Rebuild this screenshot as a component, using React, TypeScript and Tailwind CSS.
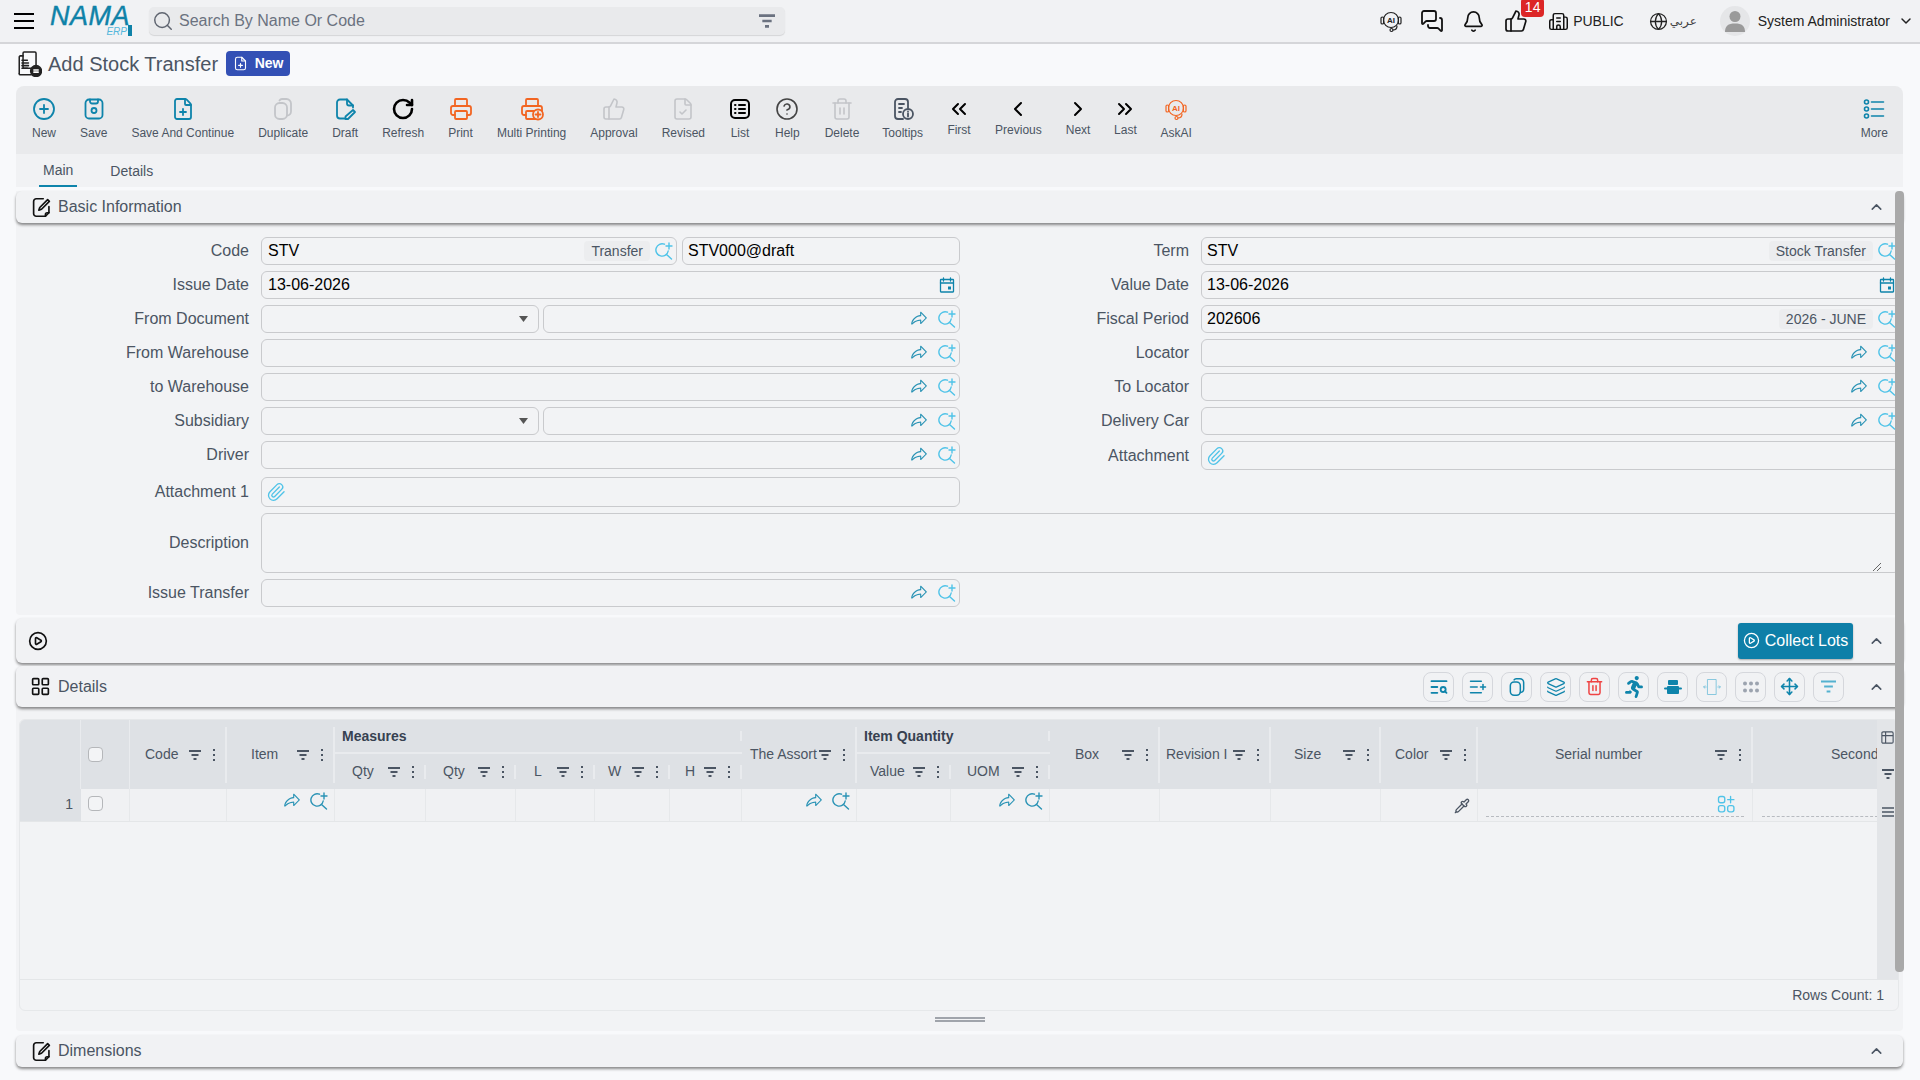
import React from 'react';
import {
  CirclePlus, FilePlus, RotateCw, Printer, ThumbsUp, FileCheck, CircleHelp, Trash2, ChevronsLeft, ChevronLeft,
  ChevronRight, ChevronsRight, MessagesSquare, Bell, Building2, Globe, ChevronDown, ChevronUp, Search, Paperclip,
  LayoutGrid, TextSearch, ListPlus, Layers, Move, Pipette, CirclePlay, Table2,
} from 'lucide-react';
import { FaRunning } from 'react-icons/fa';
import { PiShareFat } from 'react-icons/pi';

const TEAL = '#0e84ab';
const SKY = '#4fc3e8';
const ORANGE = '#f26522';
const GRAY = '#c3c5c9';

function Ic({ size = 24, color = 'currentColor', sw = 1.8, children, vb = '0 0 24 24' }: { size?: number; color?: string; sw?: number; children: React.ReactNode; vb?: string }) {
  return (
    <svg width={size} height={size} viewBox={vb} fill="none" stroke={color} strokeWidth={sw} strokeLinecap="round" strokeLinejoin="round" className="shrink-0">
      {children}
    </svg>
  );
}

const FilterBars = ({ size = 12, color = '#4b5563', sw = 2 }: { size?: number; color?: string; sw?: number }) => (
  <svg width={size} height={size} viewBox="0 0 12 12" fill="none" stroke={color} strokeWidth={sw} className="shrink-0">
    <path d="M0 2h12M2.5 6h7M4.5 10h3" />
  </svg>
);

const Kebab = () => (
  <svg width="2" height="12" viewBox="0 0 2 12" fill="#4b5563" className="shrink-0">
    <rect y="0" width="2" height="2" />
    <rect y="5" width="2" height="2" />
    <rect y="10" width="2" height="2" />
  </svg>
);

const SearchPlus = ({ size = 18, color = SKY }: { size?: number; color?: string }) => (
  <Ic size={size} color={color} sw={1.4} vb="0 0 18 18">
    <path d="M9.5 2.2A6.2 6.2 0 1 0 13.2 9" />
    <path d="M11.5 12.4L16.5 17" />
    <path d="M14 1v6M11 4h6" />
  </Ic>
);

const Share = ({ color = '#2a93b5' }: { color?: string }) => <PiShareFat size={18} color={color} className="shrink-0" />;

const CalendarIc = () => (
  <Ic size={16} color={TEAL} sw={1.3} vb="0 0 16 16">
    <rect x="1.5" y="2.5" width="13" height="12.5" rx="0.5" />
    <path d="M1.5 6h13M4.5 1v3M11.5 1v3" />
    <rect x="9" y="9.5" width="3" height="3" fill={TEAL} stroke="none" />
  </Ic>
);

const SaveIc = () => (
  <Ic color={TEAL}>
    <rect x="3.5" y="2.5" width="17" height="19" rx="3.5" />
    <path d="M8 2.5v2a2 2 0 0 0 2 2h4a2 2 0 0 0 2-2v-2" />
    <circle cx="12" cy="13.5" r="2.5" />
  </Ic>
);

const CopyIc = ({ color, size = 24 }: { color: string; size?: number }) => (
  <Ic color={color} size={size}>
    <rect x="4" y="6" width="12" height="16" rx="4.5" />
    <path d="M8.5 3.5A3 3 0 0 1 11 2h4.5A4.5 4.5 0 0 1 20 6.5v8a4 4 0 0 1-4 4" />
  </Ic>
);

const DraftIc = () => (
  <Ic color={TEAL}>
    <path d="M12 21.5H7a3 3 0 0 1-3-3v-13a3 3 0 0 1 3-3h7l6 6v2" />
    <path d="M14 2.5v4a2 2 0 0 0 2 2h4" />
    <path d="M20 13l2 2-7 7h-2.5v-2.5z" />
  </Ic>
);

const MultiPrint = () => (
  <Ic color={ORANGE}>
    <path d="M6 18H4a2 2 0 0 1-2-2v-5a2 2 0 0 1 2-2h16a2 2 0 0 1 2 2v5a2 2 0 0 1-2 2h-2" />
    <path d="M6 9V3a1 1 0 0 1 1-1h10a1 1 0 0 1 1 1v6" />
    <rect x="6" y="14" width="12" height="8" rx="1" />
    <circle cx="18" cy="17.5" r="5" fill="#e9eaec" />
    <path d="M18 15v5M15.5 17.5h5" />
  </Ic>
);

const ListIc = () => (
  <Ic color="#000" sw={2}>
    <rect x="3" y="3" width="18" height="18" rx="4" />
    <path d="M11 8h6M11 12h6M11 16h6M7 8h.5M7 12h.5M7 16h.5" />
  </Ic>
);

const TooltipIc = () => (
  <Ic color="#4b5563">
    <path d="M12 22H7a3 3 0 0 1-3-3V5a3 3 0 0 1 3-3h7a3 3 0 0 1 3 3v6" />
    <path d="M8 7h5M8 11h3M8 15h2" />
    <circle cx="17" cy="17" r="5" />
    <path d="M17 16.5v3M17 14.5h.01" />
  </Ic>
);

const Headset = ({ color, size = 24 }: { color: string; size?: number }) => (
  <Ic color={color} size={size} sw={1.2}>
    <circle cx="12" cy="11" r="7.5" />
    <rect x="2" y="8" width="2.6" height="7" rx="1.3" />
    <rect x="19.4" y="8" width="2.6" height="7" rx="1.3" />
    <path d="M18 17c0 3-2 4-4 4" />
    <circle cx="12.5" cy="21" r="1.5" />
    <text x="12" y="14" textAnchor="middle" fontSize="8" fontWeight="700" fill={color} stroke="none" fontFamily="Liberation Sans, sans-serif">AI</text>
  </Ic>
);

const MoreIc = () => (
  <Ic color={TEAL} sw={1.6}>
    <circle cx="4.5" cy="5" r="2" />
    <circle cx="4.5" cy="12" r="2" />
    <circle cx="4.5" cy="19" r="2" />
    <path d="M9.5 5h12M9.5 12h12M9.5 19h12" />
  </Ic>
);

const NoteIc = () => (
  <Ic size={21} color="#111" sw={1.9}>
    <path d="M20.5 11v7l-4 4H6a3 3 0 0 1-3-3V5a3 3 0 0 1 3-3h8" />
    <path d="M16.5 22v-2a2 2 0 0 1 2-2h2" />
    <path d="M19 3l2 2-9 9-3 1 1-3z" />
  </Ic>
);

const TitleIc = () => (
  <Ic size={26} color="#222" sw={1.4}>
    <rect x="6.5" y="1" width="12" height="15" rx="1" />
    <path d="M3 21V5.5a1 1 0 0 1 1-1h2.5" />
    <path d="M3 21a1 1 0 0 0 1 1h10" />
    <path d="M5.5 8.5h5M5.5 11h6M5.5 13.5h6M5.5 16h5" />
    <circle cx="18.5" cy="18.5" r="5" fill="#222" />
    <path d="M16.5 17.5h4M16.5 19.5h4" stroke="#fff" />
  </Ic>
);

function TB({ icon, label, up, cls = '' }: { icon: React.ReactNode; label: string; up?: boolean; cls?: string }) {
  return (
    <div className={`flex flex-col items-center ${cls}`}>
      <div className="h-6 flex items-center justify-center">{icon}</div>
      <div className={`text-[12px] leading-[14px] text-[#4b5563] whitespace-nowrap ${up ? 'mt-[2px]' : 'mt-[5px]'}`}>{label}</div>
    </div>
  );
}

const inputCls = 'h-[28px] border-[1.5px] border-[#c9cacd] rounded-[6px] flex items-center min-w-0 text-[16px] text-black';

function ShareSearch() {
  return (
    <div className="ml-auto flex items-center gap-[10px] pr-[3px]">
      <Share />
      <SearchPlus />
    </div>
  );
}

function Chip({ children }: { children: React.ReactNode }) {
  return <div className="ml-auto h-[20px] px-[7px] flex items-center bg-[#ecedef] rounded-[4px] text-[14px] text-[#4b5563] whitespace-nowrap">{children}</div>;
}

function Row({ label, w, gap, children, h = 'h-[28px]' }: { label: string; w: string; gap: string; children: React.ReactNode; h?: string }) {
  return (
    <div className={`flex items-center ${h}`}>
      <div className={`${w} ${gap} shrink-0 text-right text-[16px] text-[#4b5563] whitespace-nowrap`}>{label}</div>
      <div className="flex-1 flex gap-[5px] min-w-0 h-full">{children}</div>
    </div>
  );
}

const L = ({ label, children, h }: { label: string; children: React.ReactNode; h?: string }) => (
  <Row label={label} w="w-[233px]" gap="mr-[12px]" h={h}>{children}</Row>
);
const R = ({ label, children, h }: { label: string; children: React.ReactNode; h?: string }) => (
  <Row label={label} w="w-[228px]" gap="mr-[12px]" h={h}>{children}</Row>
);

const SelectPart = ({ w }: { w: string }) => (
  <div className={`${inputCls} ${w} shrink-0 -mr-[1px] justify-end pr-[10px]`}>
    <svg width="9" height="6" viewBox="0 0 9 6" fill="#555"><path d="M0 0h9L4.5 6z" /></svg>
  </div>
);

const LookupInput = () => (
  <div className={`${inputCls} flex-1`}>
    <ShareSearch />
  </div>
);

const Clip = () => <Paperclip size={20} color={SKY} className="ml-[4px] shrink-0" strokeWidth={1.6} />;

type Col = { w: number; label: string; pl: number; noIcons?: boolean; row?: 'lookup' | 'pipette' | 'serial' | 'dash' };

const COLS_A: Col[] = [
  { w: 97, label: 'Code', pl: 15 },
  { w: 108, label: 'Item', pl: 24, row: 'lookup' },
];
const COLS_M: Col[] = [
  { w: 91, label: 'Qty', pl: 17 },
  { w: 90, label: 'Qty', pl: 17 },
  { w: 79, label: 'L', pl: 18 },
  { w: 75, label: 'W', pl: 13 },
  { w: 72, label: 'H', pl: 15 },
];
const COL_ASSORT: Col = { w: 115, label: 'The Assort', pl: 8, row: 'lookup' };
const COLS_Q: Col[] = [
  { w: 94, label: 'Value', pl: 13 },
  { w: 99, label: 'UOM', pl: 16, row: 'lookup' },
];
const COLS_Z: Col[] = [
  { w: 110, label: 'Box', pl: 25 },
  { w: 111, label: 'Revision I', pl: 6 },
  { w: 110, label: 'Size', pl: 23 },
  { w: 97, label: 'Color', pl: 14, row: 'pipette' },
  { w: 275, label: 'Serial number', pl: 77, row: 'serial' },
  { w: 200, label: 'Second', pl: 78, noIcons: true, row: 'dash' },
];

function HeadCell({ c, sub }: { c: Col; sub?: boolean }) {
  return (
    <div style={{ width: c.w }} className="shrink-0 h-full flex items-center">
      <div style={{ paddingLeft: c.pl }} className="flex-1 min-w-0 overflow-hidden whitespace-nowrap text-[14px] text-[#4b5563]">{c.label}</div>
      {!c.noIcons && (
        <>
          <div className="ml-[1px] mr-[12px]"><FilterBars /></div>
          <div className="mr-[10px] flex"><Kebab /></div>
          <div className={`w-[2px] bg-[#e9ebee] shrink-0 ${sub ? 'h-[14px]' : 'h-[56px]'}`} />
        </>
      )}
    </div>
  );
}

function BodyCell({ c }: { c: Col }) {
  return (
    <div style={{ width: c.w }} className="shrink-0 h-full border-r border-[#e6e8ea] flex items-start">
      {c.row === 'lookup' && (
        <div className="ml-auto mt-[3px] mr-[6px] flex items-center gap-[9px]">
          <Share />
          <SearchPlus color="#2a93b5" />
        </div>
      )}
      {c.row === 'pipette' && (
        <div className="ml-auto mr-[7px] mt-[9px]"><Pipette size={16} color="#4b5563" strokeWidth={2} /></div>
      )}
      {c.row === 'serial' && (
        <div className="mx-[8px] flex-1 h-[28px] border-b border-dashed border-[#b8bbc0] flex items-start justify-end pr-[8px] pt-[5px]">
          <Ic size={20} color={SKY} sw={1.6}>
            <rect x="3" y="3" width="7.5" height="7.5" rx="2.5" />
            <path d="M17.5 3v7.5M14 6.8h7.5" />
            <rect x="3" y="14" width="7.5" height="7.5" rx="2.5" />
            <rect x="14" y="14" width="7.5" height="7.5" rx="2.5" />
          </Ic>
        </div>
      )}
      {c.row === 'dash' && <div className="ml-[9px] w-[116px] h-[28px] border-b border-dashed border-[#b8bbc0]" />}
    </div>
  );
}

const CheckBox = () => <div className="w-[15px] h-[15px] rounded-[4px] border border-[#b5b7ba] bg-[#f3f4f6]" />;

function GroupHead({ title, cols }: { title: string; cols: Col[] }) {
  const w = cols.reduce((a, c) => a + c.w, 0);
  return (
    <div style={{ width: w }} className="shrink-0 h-full flex flex-col">
      <div className="h-[34px] flex items-center justify-between border-b-2 border-[#e9ebee] pl-[7px]">
        <span className="text-[14px] font-bold text-[#374151]">{title}</span>
        <div className="w-[2px] h-[10px] bg-[#e9ebee]" />
      </div>
      <div className="flex-1 flex">
        {cols.map((c, i) => <HeadCell key={i} c={c} sub />)}
      </div>
    </div>
  );
}

function ToolBtn({ children }: { children: React.ReactNode }) {
  return <div className="w-[31px] h-[30px] rounded-[8px] border border-[#d5d7dc] flex items-center justify-center">{children}</div>;
}

function SectionHead({ icon, title, right, h, mt = '', iconCls = 'ml-[15px] mr-[6px]' }: { icon?: React.ReactNode; title?: string; right?: React.ReactNode; h: string; mt?: string; iconCls?: string }) {
  return (
    <div className={`${h} ${mt} bg-[#f1f2f4] rounded-[6px] shadow-[0_2px_3px_rgba(0,0,0,0.45)] flex items-center relative`}>
      <div className={`${iconCls} flex`}>{icon}</div>
      {title && <span className="text-[16px] text-[#4b5563]">{title}</span>}
      <div className="ml-auto flex items-center">{right}</div>
      <div className="w-[17px] ml-[15px] mr-[18px] flex justify-center shrink-0">
        <ChevronUp size={18} color="#4b5563" strokeWidth={2.2} />
      </div>
    </div>
  );
}

export default function App() {
  const allCols = [...COLS_A, ...COLS_M, COL_ASSORT, ...COLS_Q, ...COLS_Z];
  return (
    <div className="relative w-[1920px] h-[1080px] overflow-hidden bg-[#f8f9fb] font-['Liberation_Sans','DejaVu_Sans',sans-serif]">
      {/* top bar */}
      <header className="h-[44px] bg-[#f1f2f4] border-b-2 border-[#d5d6d9] flex items-center">
        <svg width="20" height="16" viewBox="0 0 20 16" stroke="#000" strokeWidth="2" className="ml-[14px] shrink-0"><path d="M0 1h20M0 8h20M0 15h20" /></svg>
        <div className="ml-[16px] w-[83px] h-[30px] flex flex-col shrink-0">
          <div className="h-[20px] text-[27px] leading-[20px] italic text-[#0f82a8] tracking-[0.5px] [-webkit-text-stroke:0.4px_#0f82a8]">NAMA</div>
          <div className="flex items-center justify-end pr-[1px] mt-[1px]">
            <span className="text-[10px] leading-[9px] italic text-[#55b8dc]">ERP</span>
            <div className="w-[4px] h-[11px] bg-[#0f82a8] ml-[1px] -mt-[3px]" />
          </div>
        </div>
        <div className="ml-[16px] w-[636px] h-[28px] rounded-[5px] bg-[#e9eaec] shadow-[0_1px_1px_rgba(0,0,0,0.12)] flex items-center pl-[3px] pr-[10px]">
          <Search size={22} color="#5f6570" strokeWidth={1.6} className="shrink-0" />
          <span className="ml-[5px] text-[16px] text-[#6b7280]">Search By Name Or Code</span>
          <div className="ml-auto"><FilterBars size={16} color="#6b7280" /></div>
        </div>
        <div className="ml-auto flex items-center">
          <Headset color="#222" size={24} />
          <div className="ml-[17px]"><MessagesSquare size={24} color="#111" strokeWidth={1.8} /></div>
          <div className="ml-[18px]"><Bell size={23} color="#111" strokeWidth={1.8} /></div>
          <div className="ml-[19px] relative w-[24px]">
            <ThumbsUp size={24} color="#111" strokeWidth={1.7} />
            <div className="absolute left-[17px] -top-[11px] w-[23px] h-[19px] rounded-[4px] bg-[#dc2626] text-white text-[14px] leading-[19px] text-center">14</div>
          </div>
          <div className="ml-[20px]"><Building2 size={21} color="#111" strokeWidth={1.7} /></div>
          <span className="ml-[4px] text-[14px] text-[#222]">PUBLIC</span>
          <div className="ml-[25px]"><Globe size={19} color="#222" strokeWidth={1.6} /></div>
          <span className="ml-[2px] w-[27px] text-[12px] text-[#444]">عربي</span>
          <div className="ml-[23px] w-[30px] h-[30px] rounded-full bg-[#e5e6e8] flex items-center justify-center">
            <svg width="20" height="22" viewBox="0 0 20 22" fill="#9a9a9a"><circle cx="10" cy="6.5" r="5.5" /><path d="M0 22c0-6 3-8.5 10-8.5S20 16 20 22z" /></svg>
          </div>
          <span className="ml-[8px] text-[14px] text-[#222] whitespace-nowrap">System Administrator</span>
          <div className="ml-[8px] mr-[6px]"><ChevronDown size={16} color="#222" strokeWidth={2.2} /></div>
        </div>
      </header>

      {/* title */}
      <div className="h-[42px] flex items-center pl-[16px] pb-[3px]">
        <TitleIc />
        <span className="ml-[6px] text-[20px] text-[#4b5563]">Add Stock Transfer</span>
        <div className="ml-[8px] h-[25px] w-[64px] rounded-[4px] bg-[#3350b5] flex items-center justify-center gap-[7px] text-white">
          <Ic size={15} color="#fff" sw={1.8}>
            <path d="M14 2H7a3 3 0 0 0-3 3v14a3 3 0 0 0 3 3h10a3 3 0 0 0 3-3V8z" />
            <path d="M14 2v6h6M12 12v6M9 15h6" />
          </Ic>
          <span className="text-[14px] font-bold">New</span>
        </div>
      </div>

      <main className="mx-[16px] w-[1887px]">
        {/* toolbar */}
        <div className="h-[68px] bg-[#e9eaec] rounded-t-[8px] flex pl-[16px] pr-[15px] pt-[11px] gap-[24px]">
          <TB icon={<CirclePlus size={24} color={TEAL} strokeWidth={1.8} />} label="New" />
          <TB icon={<SaveIc />} label="Save" />
          <TB icon={<FilePlus size={24} color={TEAL} strokeWidth={1.8} />} label="Save And Continue" />
          <TB icon={<CopyIc color={GRAY} />} label="Duplicate" />
          <TB icon={<DraftIc />} label="Draft" />
          <TB icon={<RotateCw size={24} color="#000" strokeWidth={2.6} />} label="Refresh" />
          <TB icon={<Printer size={24} color={ORANGE} strokeWidth={1.8} />} label="Print" />
          <TB icon={<MultiPrint />} label="Multi Printing" />
          <TB icon={<ThumbsUp size={24} color={GRAY} strokeWidth={1.6} />} label="Approval" />
          <TB icon={<FileCheck size={24} color={GRAY} strokeWidth={1.6} />} label="Revised" />
          <TB cls="-ml-[1px]" icon={<ListIc />} label="List" />
          <TB cls="-ml-[1px]" icon={<CircleHelp size={24} color="#444" strokeWidth={1.6} />} label="Help" />
          <TB cls="ml-[1px]" icon={<Trash2 size={24} color={GRAY} strokeWidth={1.6} />} label="Delete" />
          <TB cls="-ml-[1px]" icon={<TooltipIc />} label="Tooltips" />
          <TB up icon={<ChevronsLeft size={24} color="#000" strokeWidth={2} />} label="First" />
          <TB up icon={<ChevronLeft size={24} color="#000" strokeWidth={2} />} label="Previous" />
          <TB up icon={<ChevronRight size={24} color="#000" strokeWidth={2} />} label="Next" />
          <TB up cls="-ml-[1px]" icon={<ChevronsRight size={24} color="#000" strokeWidth={2} />} label="Last" />
          <TB cls="-ml-[1px]" icon={<Headset color={ORANGE} />} label="AskAI" />
          <div className="ml-auto"><TB icon={<MoreIc />} label="More" /></div>
        </div>

        {/* tabs */}
        <div className="h-[33px] bg-[#f1f2f4] flex pl-[23px] gap-[33px] text-[14px] text-[#4b5563]">
          <div className="px-[4px] h-full flex items-center border-b-2 border-[#0e84ab] text-[#4b5563] pt-[2px]">Main</div>
          <div className="px-0 h-full flex items-center pt-[2px]">Details</div>
        </div>

        {/* basic information */}
        <div className="mt-[4px] pb-[8px] bg-[#f2f3f5] rounded-b-[4px]">
          <SectionHead h="h-[32px]" icon={<NoteIc />} title="Basic Information" />
          <div className="pt-[14px] pr-[3px]">
            <div className="flex">
              <div className="w-[945px] shrink-0 flex flex-col gap-[6px] pr-[1px]">
                <L label="Code">
                  <div className={`${inputCls} w-[416px] shrink-0 pl-[6px] pr-[3px]`}>
                    STV
                    <Chip>Transfer</Chip>
                    <div className="ml-[5px] flex"><SearchPlus /></div>
                  </div>
                  <div className={`${inputCls} flex-1 pl-[5px]`}>STV000@draft</div>
                </L>
                <L label="Issue Date">
                  <div className={`${inputCls} flex-1 pl-[6px] pr-[4px]`}>
                    13-06-2026
                    <div className="ml-auto flex"><CalendarIc /></div>
                  </div>
                </L>
                <L label="From Document"><SelectPart w="w-[278px]" /><LookupInput /></L>
                <L label="From Warehouse"><LookupInput /></L>
                <L label="to Warehouse"><LookupInput /></L>
                <L label="Subsidiary"><SelectPart w="w-[278px]" /><LookupInput /></L>
                <L label="Driver"><LookupInput /></L>
                <div className="mt-[2px]">
                  <L label="Attachment 1" h="h-[30px]"><div className={`${inputCls} !h-[30px] flex-1`}><Clip /></div></L>
                </div>
              </div>
              <div className="flex-1 min-w-0 flex flex-col gap-[6px]">
                <R label="Term">
                  <div className={`${inputCls} flex-1 pl-[5px] pr-[3px]`}>
                    STV
                    <Chip>Stock Transfer</Chip>
                    <div className="ml-[5px] flex"><SearchPlus /></div>
                  </div>
                </R>
                <R label="Value Date">
                  <div className={`${inputCls} flex-1 pl-[5px] pr-[4px]`}>
                    13-06-2026
                    <div className="ml-auto flex"><CalendarIc /></div>
                  </div>
                </R>
                <R label="Fiscal Period">
                  <div className={`${inputCls} flex-1 pl-[5px] pr-[3px]`}>
                    202606
                    <Chip>2026 - JUNE</Chip>
                    <div className="ml-[5px] flex"><SearchPlus /></div>
                  </div>
                </R>
                <R label="Locator"><LookupInput /></R>
                <R label="To Locator"><LookupInput /></R>
                <R label="Delivery Car"><LookupInput /></R>
                <R label="Attachment" h="h-[29px]"><div className={`${inputCls} !h-[29px] flex-1`}><Clip /></div></R>
              </div>
            </div>

            <div className="mt-[6px]">
              <Row label="Description" w="w-[233px]" gap="mr-[12px]" h="h-[60px]">
                <div className={`${inputCls} !h-[60px] flex-1 relative`}>
                  <svg width="9" height="9" viewBox="0 0 9 9" stroke="#666" strokeWidth="1" className="absolute right-[18px] bottom-[1px]"><path d="M1 9L9 1M5 9l4-4" /></svg>
                </div>
              </Row>
            </div>
            <div className="mt-[6px] w-[944px]">
              <L label="Issue Transfer"><LookupInput /></L>
            </div>
          </div>
        </div>

        {/* collect lots */}
        <SectionHead
          h="h-[45px]"
          mt="mt-[3px]"
          iconCls="ml-[12px] mr-[6px]"
          icon={<CirclePlay size={20} color="#111" strokeWidth={2} />}
          right={
            <div className="h-[36px] w-[115px] rounded-[3px] bg-[#0e7fa8] text-white text-[16px] shadow-[0_1px_2px_rgba(0,0,0,0.3)] flex items-center justify-center gap-[5px]">
              <CirclePlay size={17} color="#fff" strokeWidth={1.8} />
              <span>Collect Lots</span>
            </div>
          }
        />

        {/* details header */}
        <SectionHead
          h="h-[41px]"
          mt="mt-[3px]"
          iconCls="ml-[14px] mr-[7px]"
          icon={<LayoutGrid size={21} color="#111" strokeWidth={1.9} />}
          title="Details"
          right={
            <div className="flex gap-[8px] mr-[9px]">
              <ToolBtn><TextSearch size={20} color={TEAL} strokeWidth={2.2} /></ToolBtn>
              <ToolBtn><ListPlus size={20} color={TEAL} strokeWidth={1.8} /></ToolBtn>
              <ToolBtn><CopyIc color={TEAL} size={20} /></ToolBtn>
              <ToolBtn><Layers size={20} color={TEAL} strokeWidth={1.5} /></ToolBtn>
              <ToolBtn><Trash2 size={19} color="#ef4444" strokeWidth={1.9} /></ToolBtn>
              <ToolBtn><FaRunning size={22} color={TEAL} /></ToolBtn>
              <ToolBtn>
                <svg width="18" height="14" viewBox="0 0 18 14" fill={TEAL}><rect x="4" y="0" width="10" height="5" rx="1" /><rect x="3" y="6" width="12" height="8" rx="1" /><rect x="0" y="7.5" width="18" height="2" rx="1" /></svg>
              </ToolBtn>
              <ToolBtn>
                <Ic size={20} color="#7fc4dc" sw={1.1}>
                  <rect x="7" y="3" width="10" height="18" />
                  <path d="M2 12h3M3.5 10.5L2 12l1.5 1.5M22 12h-3M20.5 10.5L22 12l-1.5 1.5" />
                </Ic>
              </ToolBtn>
              <ToolBtn>
                <svg width="18" height="12" viewBox="0 0 18 12" fill="#9ca3af"><circle cx="3" cy="2.5" r="2" /><circle cx="9" cy="2.5" r="2" /><circle cx="15" cy="2.5" r="2" /><circle cx="3" cy="9.5" r="2" /><circle cx="9" cy="9.5" r="2" /><circle cx="15" cy="9.5" r="2" /></svg>
              </ToolBtn>
              <ToolBtn><Move size={19} color={TEAL} strokeWidth={2} /></ToolBtn>
              <ToolBtn><FilterBars size={15} color="#55b1cf" sw={1.6} /></ToolBtn>
            </div>
          }
        />

        {/* details grid */}
        <div className="pt-[12px] bg-[#f2f3f5] px-[3px] rounded-b-[4px]">
          <div className="w-[1880px] h-[292px] rounded-[6px] border border-[#e6e8ea] flex flex-col overflow-hidden">
            <div className="flex-1 flex min-h-0">
              <div className="w-[1857px] shrink-0 overflow-hidden flex flex-col">
                <div className="h-[69px] bg-[#dee1e5] flex items-stretch w-max">
                  <div className="w-[61px] shrink-0 border-r border-[#e9ebee]" />
                  <div className="w-[49px] shrink-0 flex items-center pl-[7px] border-r border-[#e9ebee]"><CheckBox /></div>
                  {COLS_A.map((c, i) => <HeadCell key={i} c={c} />)}
                  <GroupHead title="Measures" cols={COLS_M} />
                  <HeadCell c={COL_ASSORT} />
                  <GroupHead title="Item Quantity" cols={COLS_Q} />
                  {COLS_Z.map((c, i) => <HeadCell key={i} c={c} />)}
                </div>
                <div className="h-[33px] flex w-max border-b border-[#e4e6e8] bg-[#f0f1f3]">
                  <div className="w-[61px] shrink-0 bg-[#dee1e5] text-right pr-[8px] pt-[6px] text-[14px] text-[#4b5563] leading-[18px]">1</div>
                  <div className="w-[49px] shrink-0 border-r border-[#e6e8ea] flex pl-[7px] pt-[7px]"><CheckBox /></div>
                  {allCols.map((c, i) => <BodyCell key={i} c={c} />)}
                </div>
              </div>
              <div className="flex-1 bg-[#e3e5e8] flex flex-col items-center pt-[10px]">
                <Table2 size={15} color="#4b5563" strokeWidth={1.8} />
                <div className="mt-[23px]"><FilterBars size={12} color="#4b5563" /></div>
                <div className="mt-[27px]">
                  <svg width="12" height="10" viewBox="0 0 12 10" stroke="#4b5563" strokeWidth="1.6"><path d="M0 1h12M0 5h12M0 9h12" /></svg>
                </div>
              </div>
            </div>
            <div className="h-[31px] shrink-0 border-t border-[#e4e6e8] flex items-center justify-end pr-[14px] text-[14px] text-[#4b5563]">Rows Count: 1</div>
          </div>
          <div className="h-[20px] flex justify-center pt-[6px]">
            <div className="w-[50px] h-[5px] border-y-2 border-[#a0a4ab]" />
          </div>
        </div>

        {/* dimensions */}
        <SectionHead h="h-[32px]" mt="mt-[4px]" icon={<NoteIc />} title="Dimensions" />
      </main>

      {/* scrollbar thumb */}
      <div className="absolute left-[1895px] top-[191px] w-[9px] h-[781px] rounded-[4px] bg-[#a9a9a9]" />
    </div>
  );
}
